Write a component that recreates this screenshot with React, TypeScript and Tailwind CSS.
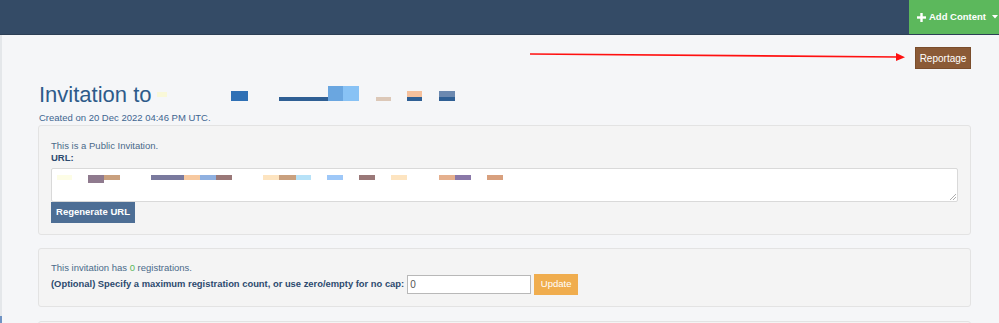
import React from "react";

function Block({ left, top, w, h, c }: { left: number; top: number; w: number; h: number; c: string }) {
  return <span className="absolute" style={{ left, top, width: w, height: h, background: c }} />;
}

export default function App() {
  // page coords: x, y, w, h, colour
  const title: [number, number, number, number, string][] = [
    [157, 92, 10, 5, "#f9f8d8"],
    [231, 91, 17, 10, "#2f70b5"],
    [279, 97, 49, 4, "#2f5f94"],
    [328, 86, 15, 15, "#6aa6e0"],
    [343, 86, 16, 15, "#88c2f5"],
    [376, 97, 15, 4, "#dcc8b8"],
    [407, 91, 15, 6, "#f5c09c"],
    [407, 97, 15, 4, "#2f5f94"],
    [439, 91, 16, 6, "#6c89b0"],
    [439, 97, 16, 4, "#2f5f94"],
  ];
  const url: [number, number, string, number?][] = [
    [57, 15, "#fdfde6"],
    [88, 16, "#8f7a8e", 8],
    [104, 16, "#c9a07e"],
    [151, 33, "#7a7a9e"],
    [184, 16, "#f7c9a0"],
    [200, 16, "#8fb0e0"],
    [216, 16, "#9a7878"],
    [263, 16, "#fde4c0"],
    [279, 17, "#c9a07e"],
    [296, 15, "#b7e2f8"],
    [327, 16, "#9ec8f8"],
    [359, 16, "#9a7878"],
    [391, 16, "#fde4c0"],
    [439, 16, "#e5b08e"],
    [455, 16, "#8a78a8"],
    [487, 16, "#d8a07e"],
  ];
  return (
    <div
      className="relative w-[999px] h-[323px] overflow-hidden bg-[#f5f6f8]"
      style={{ fontFamily: '"Liberation Sans", Arial, sans-serif' }}
    >
      {/* header */}
      <div className="flex h-[35px] items-stretch justify-end bg-[#344b66] border-b border-[#2c3f55]">
        <div className="flex w-[90px] items-center whitespace-nowrap bg-[#5cb85c] pl-[8px] text-[9.5px] font-bold text-white">
          <svg width="9" height="9" viewBox="0 0 9 9" className="mr-[3px]">
            <rect x="3.3" y="0" width="2.4" height="9" fill="white" />
            <rect x="0" y="3.3" width="9" height="2.4" fill="white" />
          </svg>
          <span>Add Content</span>
          <svg width="6" height="4" viewBox="0 0 6 4" className="ml-[6px]">
            <path d="M0 0 L6 0 L3 3.5 Z" fill="white" />
          </svg>
        </div>
      </div>

      {/* left edge */}
      <div className="absolute left-0 top-[35px] h-[288px] w-[2px] bg-[#e4e7ea]" />
      <div className="absolute left-0 top-[316px] h-[7px] w-[2px] bg-[#6f93c4]" />

      <div className="pl-[38px] pr-[28px]">
        <div className="flex justify-end pt-[12px]">
          <button className="h-[22px] w-[56px] border border-[#7a4d2c] bg-[#8b5a36] text-[10px] text-white">
            Reportage
          </button>
        </div>

        <div className="relative mt-[9px] flex h-[28px] items-end">
          <h1 className="pl-[1px] text-[22px] leading-[22px] text-[#2e5b8a]">Invitation to</h1>
          {title.map(([x, y, w, h, c], i) => (
            <Block key={i} left={x - 38} top={y - 78} w={w} h={h} c={c} />
          ))}
        </div>

        <div className="mt-[6px] pl-[1px] text-[9.5px] leading-[12px] text-[#3e6590]">
          Created on 20 Dec 2022 04:46 PM UTC.
        </div>

        <div className="mt-[1px] h-[110px] rounded-[3px] border border-[#e3e3e3] bg-[#f4f4f4] px-[12px] pt-[14px]">
          <div className="text-[9.5px] leading-[12px] text-[#4a6a8a]">This is a Public Invitation.</div>
          <div className="text-[9.5px] font-bold leading-[12px] text-[#2c4a6e]">URL:</div>
          <div className="relative mt-[4px] h-[34px] rounded-[2px] border border-[#d9d9d9] bg-white">
            {url.map(([x, w, c, h], i) => (
              <span
                key={i}
                className="absolute top-[6px]"
                style={{ left: x - 52, width: w, height: h ?? 5, background: c }}
              />
            ))}
            <svg className="absolute bottom-[1px] right-[1px]" width="6" height="6" viewBox="0 0 6 6">
              <path d="M6 0 L0 6 M6 3 L3 6" stroke="#999" strokeWidth="0.8" />
            </svg>
          </div>
          <button className="block h-[21px] w-[84px] whitespace-nowrap bg-[#4d6e95] text-[9.5px] font-bold text-white">
            Regenerate URL
          </button>
        </div>

        <div className="mt-[13px] h-[59px] rounded-[3px] border border-[#e3e3e3] bg-[#f4f4f4] px-[12px] pt-[13px]">
          <div className="text-[9.5px] leading-[12px] text-[#4a6a8a]">
            This invitation has <span className="text-[#5cb85c]">0</span> registrations.
          </div>
          <div className="flex items-center">
            <span className="whitespace-nowrap text-[9.4px] font-bold text-[#2c4a6e]">
              (Optional) Specify a maximum registration count, or use zero/empty for no cap:
            </span>
            <div className="ml-[3px] flex h-[19px] w-[124px] items-center border border-[#b8b8b8] bg-white pl-[2px] text-[10px] text-[#555]">
              0
            </div>
            <button className="ml-[3px] h-[21px] w-[44px] bg-[#f0ad4e] text-[9.5px] text-white">Update</button>
          </div>
        </div>

        <div className="mt-[14px] h-[40px] rounded-[3px] border border-[#e3e3e3] bg-[#f4f4f4]" />
      </div>

      {/* annotation arrow */}
      <svg className="absolute left-0 top-0" width="999" height="323" viewBox="0 0 999 323">
        <path d="M530 54 L898 57" stroke="#ff1010" strokeWidth="1.6" fill="none" />
        <path d="M896 53 L905 57.3 L896 61 Z" fill="#ff1010" />
      </svg>
    </div>
  );
}
